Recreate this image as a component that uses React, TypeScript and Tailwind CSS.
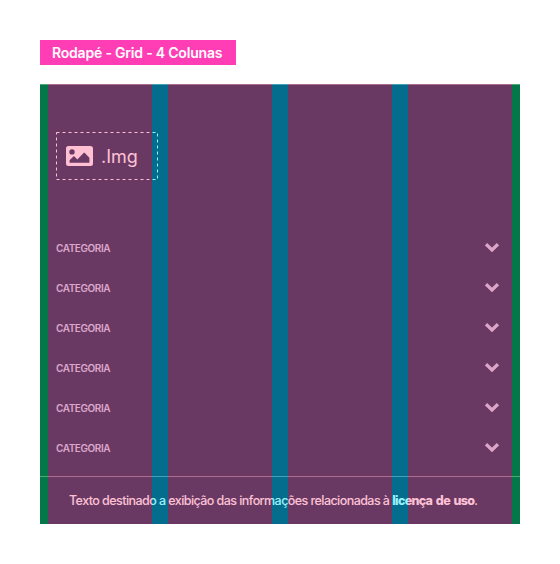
const categories = ['CATEGORIA', 'CATEGORIA', 'CATEGORIA', 'CATEGORIA', 'CATEGORIA', 'CATEGORIA'];

function Chevron() {
  return (
    <svg className="h-[10px] w-[14px]" viewBox="0 0 14 10" fill="none">
      <path d="M2.300 2.400 7 6.900 11.700 2.400" stroke="currentColor" strokeWidth="3.4" strokeLinecap="square" strokeLinejoin="miter" />
    </svg>
  );
}

function ImageIcon() {
  return (
    <svg className="h-5 w-[27px] shrink-0" viewBox="0 0 27 20" fill="currentColor">
      <path
        fillRule="evenodd"
        d="M2.5 0h22A2.5 2.5 0 0 1 27 2.500v15a2.500 2.500 0 0 1-2.500 2.500h-22A2.500 2.500 0 0 1 0 17.500v-15A2.500 2.500 0 0 1 2.500 0ZM6 3.200a2.700 2.700 0 1 0 0 5.400a2.700 2.700 0 0 0 0-5.400ZM3.600 16.700h19.800v-5l-4.600-4.800q-.6-.6-1.200 0l-6.300 6.500-2.800-2.800q-.6-.6-1.200 0l-3.700 3.700Z"
      />
    </svg>
  );
}

function GridOverlay() {
  return (
    <div className="pointer-events-none absolute inset-x-0 -top-px bottom-0 flex opacity-40">
      <div className="w-2 bg-[#00ff57]" />
      <div className="flex-1 bg-[#ff6396]" />
      <div className="w-4 bg-[#00e2fc]" />
      <div className="flex-1 bg-[#ff6396]" />
      <div className="w-4 bg-[#00e2fc]" />
      <div className="flex-1 bg-[#ff6396]" />
      <div className="w-4 bg-[#00e2fc]" />
      <div className="flex-1 bg-[#ff6396]" />
      <div className="w-2 bg-[#00ff57]" />
    </div>
  );
}

export default function App() {
  return (
    <div className="h-[564px] w-[560px] bg-white px-10 pt-10 font-['Inter',sans-serif]">
      <h1 className="flex h-[25px] w-[196px] items-center bg-[#ff3eb5] pl-3 text-[14px] font-semibold whitespace-nowrap text-white">
        <span className="tracking-[-0.2px]">Rodapé - Grid - 4 Colunas</span>
      </h1>

      <footer className="relative mt-[19px] h-[440px] border-t border-[#787485] bg-[#071d41] text-white">
        <div className="pt-[47px] pl-4">
          <div className="relative flex h-12 w-[102px] items-center pl-[10px]">
            <svg className="absolute inset-0 h-12 w-[102px]" fill="none">
              <rect x="0.5" y="0.5" width="101" height="47" stroke="currentColor" strokeDasharray="3 3" />
            </svg>
            <ImageIcon />
            <span className="ml-[8px] pt-0.5 text-[18px] leading-6 tracking-[0px]">.Img</span>
          </div>
        </div>

        <ul className="mt-12 pr-[21px] pl-4 text-[#c5d4eb]">
          {categories.map((name, i) => (
            <li key={i} className="flex h-10 items-center justify-between">
              <span className="text-[10px] font-semibold tracking-[-0.42px]">{name}</span>
              <Chevron />
            </li>
          ))}
        </ul>

        <div className="mt-2 h-12 border-t border-[#787485] pt-[14px] pl-[29px] text-[12.5px] leading-5 tracking-[-0.5px] whitespace-nowrap">
          <span className="font-[450] tracking-[-0.56px]">Texto destinado a exibição das informações relacionadas à </span>
          <strong className="font-extrabold tracking-[-0.68px] [word-spacing:1.5px]">licença de uso</strong>.
        </div>

        <GridOverlay />
      </footer>
    </div>
  );
}
